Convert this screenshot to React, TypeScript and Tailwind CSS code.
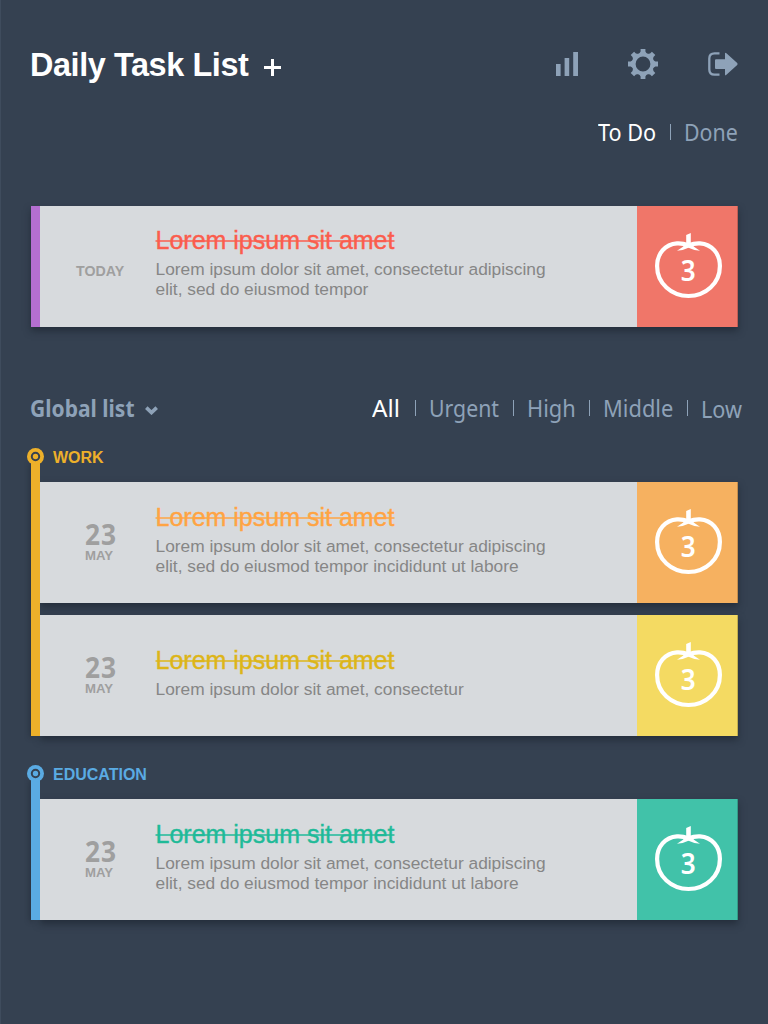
import type { ReactNode } from "react";

type Task = {
  day?: string;
  month?: string;
  titleColor: string;
  tileColor: string;
  lines: string[];
  count: number;
};

const today: Task = {
  titleColor: "text-[#fb5d4d] decoration-[#fb5d4d]/75",
  tileColor: "bg-[#f07669]",
  lines: ["Lorem ipsum dolor sit amet, consectetur adipiscing", "elit, sed do eiusmod tempor"],
  count: 3,
};

const work: Task[] = [
  {
    day: "23",
    month: "MAY",
    titleColor: "text-[#ffa443] decoration-[#ffa443]/75",
    tileColor: "bg-[#f6b160]",
    lines: [
      "Lorem ipsum dolor sit amet, consectetur adipiscing",
      "elit, sed do eiusmod tempor incididunt ut labore",
    ],
    count: 3,
  },
  {
    day: "23",
    month: "MAY",
    titleColor: "text-[#ddb518] decoration-[#ddb518]/75",
    tileColor: "bg-[#f4da62]",
    lines: ["Lorem ipsum dolor sit amet, consectetur"],
    count: 3,
  },
];

const education: Task[] = [
  {
    day: "23",
    month: "MAY",
    titleColor: "text-[#1fba98] decoration-[#1fba98]/75",
    tileColor: "bg-[#41c2a9]",
    lines: [
      "Lorem ipsum dolor sit amet, consectetur adipiscing",
      "elit, sed do eiusmod tempor incididunt ut labore",
    ],
    count: 3,
  },
];

function BarsIcon() {
  return (
    <svg width="22" height="24" viewBox="0 0 22 24" fill="currentColor">
      <rect x="0" y="12" width="4.6" height="12" />
      <rect x="8.6" y="6" width="4.6" height="18" />
      <rect x="17.2" y="0" width="4.8" height="24" />
    </svg>
  );
}

function GearIcon() {
  return (
    <svg width="30" height="30" viewBox="-15 -15 30 30" fill="currentColor">
      <circle r="9.3" fill="none" stroke="currentColor" strokeWidth="3.8" />
      {[0, 45, 90, 135, 180, 225, 270, 315].map((a) => (
        <path key={a} d="M-4 -10 L-2.4 -12.4 V-15 H2.4 V-12.4 L4 -10 Z" transform={`rotate(${a})`} />
      ))}
    </svg>
  );
}

function ExitIcon() {
  return (
    <svg width="30" height="24" viewBox="0 0 30 24">
      <path
        d="M11.5 1.3 H6.5 Q1.3 1.3 1.3 6.5 V17.5 Q1.3 22.7 6.5 22.7 H11.5"
        fill="none"
        stroke="currentColor"
        strokeWidth="2.3"
      />
      <path
        d="M8 7.2 H17 V1.6 Q17 0 18.4 1.2 L29.2 11 Q30 12 29.2 13 L18.4 22.8 Q17 24 17 22.4 V16.9 H8 Q7 16.9 7 15.9 V8.2 Q7 7.2 8 7.2 Z"
        fill="currentColor"
      />
    </svg>
  );
}

function Tomato({ count }: { count: number }) {
  return (
    <div className="relative h-[66px] w-[67px]">
      <svg width="67" height="66" viewBox="0 0 67 66" className="block">
        <path
          d="M33.5 12.2 C29 10.6 25.5 10.2 22 10.4 C10 11.3 2.1 20.8 2.1 33 C2.1 50.5 16.5 63 33.5 63 C50.5 63 64.9 50.5 64.9 33 C64.9 20.8 57 11.3 45 10.4 C41.5 10.2 38 10.6 33.5 12.2 Z"
          fill="none"
          stroke="#fff"
          strokeWidth="4.2"
        />
        <path
          d="M31.2 2 L35.8 0 V10.6 Q39 14.6 45 17.8 Q38.5 17.4 33.5 14.8 Q28.5 17.4 22 17.8 Q28 14.6 31.2 10.6 Z"
          fill="#fff"
        />
      </svg>
      <span className="absolute inset-x-0 top-[16.5px] text-center font-['Noto_Sans',sans-serif] text-[29px] leading-[40px] font-semibold text-white">
        <span className="inline-block scale-x-[0.9]">{count}</span>
      </span>
    </div>
  );
}

function TaskCard({ task, rail }: { task: Task; rail?: boolean }) {
  return (
    <article
      className={
        rail
          ? "flex h-[121px] w-[707px] border-l-[9px] border-[#b46fd1] bg-[#d7dadd] shadow-[0_4px_7px_rgba(20,28,38,0.5)]"
          : "flex h-[121px] w-[698px] bg-[#d7dadd] shadow-[0_4px_7px_rgba(20,28,38,0.5)]"
      }
    >
      <div className="flex w-[115.5px] shrink-0 flex-col pl-[45px] font-bold text-[#9f9f9f]">
        {task.day ? (
          <>
            <span className="mt-[38px] w-fit origin-left scale-x-[0.94] font-['Noto_Sans',sans-serif] text-[28px] leading-[28px] tracking-[1px]">
              {task.day}
            </span>
            <span className="text-[13.2px] leading-[16px]">{task.month}</span>
          </>
        ) : (
          <span className="mt-[56px] -ml-[9px] text-[14.2px] leading-[18px]">TODAY</span>
        )}
      </div>
      <div
        className={
          rail
            ? "flex-1 pt-[19px] whitespace-nowrap"
            : task.lines.length > 1
              ? "flex-1 pt-[20px] whitespace-nowrap"
              : "flex-1 pt-[30px] whitespace-nowrap"
        }
      >
        <h3
          className={`w-fit text-[25px] leading-[30px] line-through decoration-[2px] [-webkit-text-stroke:0.4px_currentColor] ${task.titleColor}`}
        >
          Lorem ipsum sit amet
        </h3>
        <p className="mt-[4px] text-[17.33px] leading-[20px] text-[#868686]">
          {task.lines.map((line) => (
            <span key={line} className="block">
              {line}
            </span>
          ))}
        </p>
      </div>
      <div
        className={`flex w-[101px] shrink-0 border-r border-black/20 pt-[27px] pl-[18px] ${task.tileColor}`}
      >
        <Tomato count={task.count} />
      </div>
    </article>
  );
}

function Group({
  label,
  textColor,
  railColor,
  tasks,
}: {
  label: string;
  textColor: string;
  railColor: string;
  tasks: Task[];
}) {
  return (
    <section className={`relative ml-[31px] flex w-[707px] ${textColor}`}>
      <div
        className={`relative z-10 mt-[9px] w-[9px] shrink-0 shadow-[-4px_4px_5px_-3px_rgba(20,28,38,0.5)] ${railColor}`}
      />
      <svg
        className="absolute top-0 -left-[4px] z-20"
        width="17"
        height="17"
        viewBox="0 0 17 17"
      >
        <circle cx="8.5" cy="8.5" r="8.5" fill="currentColor" />
        <circle cx="8.5" cy="8.5" r="3.7" fill="none" stroke="#354151" strokeWidth="2" />
      </svg>
      <div>
        <h2 className="h-[34px] pt-px pl-[13px] text-[16px] leading-[18px] font-bold">{label}</h2>
        <div className="flex flex-col gap-[12px]">
          {tasks.map((t, i) => (
            <TaskCard key={i} task={t} />
          ))}
        </div>
      </div>
    </section>
  );
}

function Divider() {
  return <span className="h-[16px] w-px shrink-0 bg-[#8ea2b8]" />;
}

function Tab({ className, children }: { className: string; children: ReactNode }) {
  return (
    <button className={`shrink-0 text-left whitespace-nowrap ${className}`}>{children}</button>
  );
}

export default function App() {
  return (
    <main className="h-[1024px] w-[768px] overflow-hidden border-l border-[#3f4c5d] bg-[#354151] font-['Liberation_Sans',Arial,sans-serif]">
      <div className="-ml-px">
        <header className="flex h-[112px] pt-[45px]">
          <h1 className="w-[234px] pl-[30px] text-[32.4px] leading-[40px] font-bold tracking-[-0.4px] whitespace-nowrap text-white">
            Daily Task List
          </h1>
          <svg className="mt-[14px] ml-[30px]" width="17" height="17" viewBox="0 0 17 17">
            <path d="M8.5 0 V17 M0 8.5 H17" stroke="#fff" strokeWidth="3" />
          </svg>
          <nav className="flex grow justify-between pl-[275px] text-[#8ea2b8]">
            <span className="pt-[7px]">
              <BarsIcon />
            </span>
            <span className="pt-[4px]">
              <GearIcon />
            </span>
            <span className="mr-[30px] pt-[7px]">
              <ExitIcon />
            </span>
          </nav>
        </header>

        <nav className="flex h-[40px] items-center pl-[598px] font-['Noto_Sans',sans-serif] text-[23.5px] leading-[40px] text-[#8ea2b8]">
          <Tab className="w-[72px] origin-left scale-x-[0.92] text-white">To Do</Tab>
          <Divider />
          <Tab className="ml-[13px] w-[60px] origin-left scale-x-[0.91]">Done</Tab>
        </nav>

        <div className="mt-[54px] ml-[31px]">
          <TaskCard task={today} rail />
        </div>

        <div className="mt-[61px] flex h-[40px] items-center font-['Noto_Sans',sans-serif] text-[23.5px] leading-[40px] text-[#8ea2b8]">
          <button className="flex w-[372px] items-center pl-[30px] font-bold">
            <span className="w-[115px] origin-left scale-x-[0.895] text-left whitespace-nowrap">
              Global list
            </span>
            <svg className="mt-[4px]" width="13" height="9" viewBox="0 0 13 9">
              <path d="M1.3 1.6 L6.5 6.6 L11.7 1.6" fill="none" stroke="currentColor" strokeWidth="3.6" />
            </svg>
          </button>
          <Tab className="w-[43px] origin-left scale-x-[1.03] text-white">All</Tab>
          <Divider />
          <Tab className="ml-[13px] w-[84px] origin-left scale-x-[0.905]">Urgent</Tab>
          <Divider />
          <Tab className="ml-[13px] w-[62px] origin-left scale-x-[0.93]">High</Tab>
          <Divider />
          <Tab className="ml-[13px] w-[84px] origin-left scale-x-[0.93]">Middle</Tab>
          <Divider />
          <Tab className="ml-[13px] w-[46px] origin-left scale-x-[0.92] pt-px">Low</Tab>
        </div>

        <div className="mt-[20px] flex flex-col gap-[29px]">
          <Group label="WORK" textColor="text-[#edb02a]" railColor="bg-[#edb02a]" tasks={work} />
          <Group
            label="EDUCATION"
            textColor="text-[#5aabe3]"
            railColor="bg-[#5aabe3]"
            tasks={education}
          />
        </div>
      </div>
    </main>
  );
}
